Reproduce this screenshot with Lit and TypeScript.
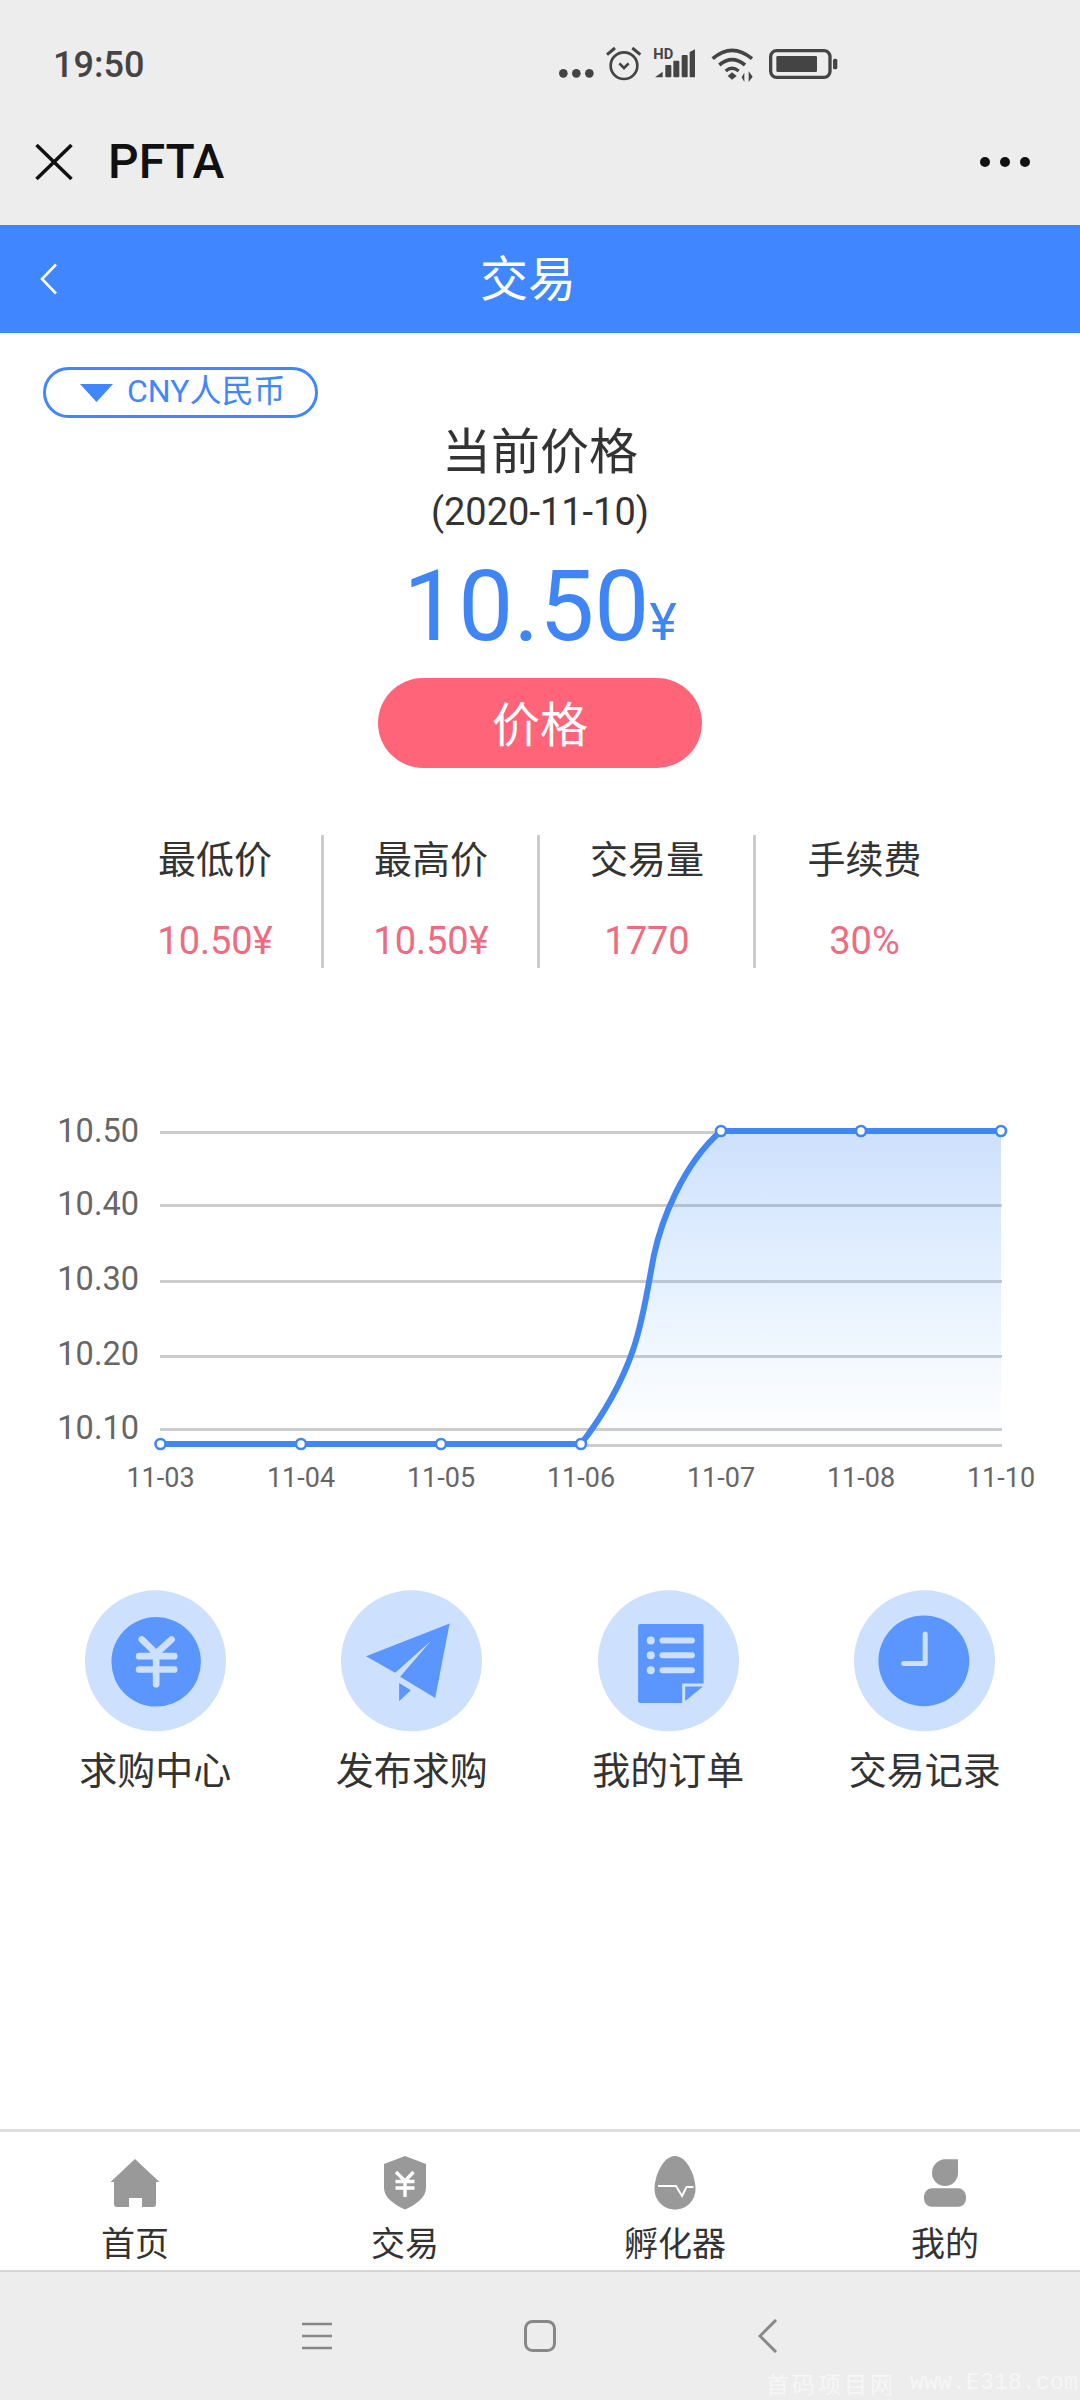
import { LitElement, html, css, svg } from "lit";
import { customElement } from "lit/decorators.js";

const gridYs = [1132, 1205, 1281, 1356, 1429, 1445];
const yLabels: [string, number][] = [["10.50", 1131], ["10.40", 1204], ["10.30", 1279], ["10.20", 1354], ["10.10", 1428]];
const xs = [160.5, 301, 441, 581, 721, 861, 1001];
const xLabels = ["11-03", "11-04", "11-05", "11-06", "11-07", "11-08", "11-10"];
const lowY = 1444;
const highY = 1131;
const rise = `C601 1418 621 1385 633 1350 C644 1318 648 1285 654 1255 C661 1222 682 1165 721 ${highY} H1001`;
const curve = `M160.5 ${lowY} H581 ${rise}`;
const area = `M581 ${lowY} ${rise} V1445 H581 Z`;

const stats = [
  ["最低价", "10.50¥"],
  ["最高价", "10.50¥"],
  ["交易量", "1770"],
  ["手续费", "30%"],
];

const actions = [
  {
    label: "求购中心",
    icon: svg`<svg class="act-ic" viewBox="105 60 422 425"><circle cx="316" cy="272" r="211" fill="#cde0fd"/><circle cx="318" cy="275" r="134" fill="#5b96ff"/><path d="M275 208 L318 250 L364 208 M267 258 H372 M267 298 H372 M318 250 V342" fill="none" stroke="#cde0fd" stroke-width="20" stroke-linecap="round" stroke-linejoin="round"/></svg>`,
  },
  {
    label: "发布求购",
    icon: svg`<svg class="act-ic" viewBox="873 60 422 425"><circle cx="1084" cy="272" r="211" fill="#cde0fd"/><path d="M1198 160 L948 258 L1035 308 L1142 213 L1050 320 L1155 383 Z M1047 338 L1082 360 L1047 393 Z" fill="#5b96ff"/></svg>`,
  },
  {
    label: "我的订单",
    icon: svg`<svg class="act-ic" viewBox="114 60 422 425"><circle cx="325" cy="272" r="211" fill="#cde0fd"/><path d="M240 162 H424 a6 6 0 0 1 6 6 V340 H366 V398 H240 a6 6 0 0 1 -6 -6 V168 a6 6 0 0 1 6 -6 Z M375 392 V349 H428 Z" fill="#5b96ff"/><g fill="#cde0fd"><circle cx="272" cy="211" r="12"/><circle cx="272" cy="255" r="12"/><circle cx="272" cy="300" r="12"/><rect x="298" y="202" width="106" height="18" rx="9"/><rect x="298" y="246" width="106" height="18" rx="9"/><rect x="298" y="291" width="106" height="18" rx="9"/></g></svg>`,
  },
  {
    label: "交易记录",
    icon: svg`<svg class="act-ic" viewBox="883 60 422 425"><circle cx="1094" cy="272" r="211" fill="#cde0fd"/><circle cx="1092" cy="272" r="136" fill="#5b96ff"/><path d="M1096 192 V280 H1032" fill="none" stroke="#cde0fd" stroke-width="15" stroke-linecap="round" stroke-linejoin="round"/></svg>`,
  },
];

const tabs = [
  {
    label: "首页",
    icon: svg`<svg class="tab-ic" viewBox="0 0 60 54"><path d="M30 3 L54.5 26 H51 V48 a3 3 0 0 1 -3 3 H37 V42 H24 V51 H12 a3 3 0 0 1 -3 -3 V26 H5.5 Z" fill="#999"/></svg>`,
  },
  {
    label: "交易",
    icon: svg`<svg class="tab-ic" viewBox="0 0 60 54"><path d="M30 0 L51 8 V32 C51 42 40 49 30 53.5 C20 49 9 42 9 32 V8 Z" fill="#999"/><path d="M21 16 L30 25 L38.5 16 M20.5 25.5 H39.5 M20.5 32 H39.5 M30 25 V41" fill="none" stroke="#fff" stroke-width="3.4"/></svg>`,
  },
  {
    label: "孵化器",
    icon: svg`<svg class="tab-ic" viewBox="0 0 60 54"><path d="M30 0 C42 0 50.5 20 50.5 33 C50.5 45 41 53.5 30 53.5 C19 53.5 9.5 45 9.5 33 C9.5 20 18 0 30 0 Z" fill="#999"/><path d="M13 30 H31 L37 40 L41.5 31 H48.5" fill="none" stroke="#fff" stroke-width="2"/></svg>`,
  },
  {
    label: "我的",
    icon: svg`<svg class="tab-ic" viewBox="0 0 60 54"><path d="M43 3.3 V17 a13 13 0 0 1 -13 13 a13 13 0 0 1 -13 -13 a13.5 13.5 0 0 1 13 -13.7 Z" fill="#999"/><rect x="9" y="32.3" width="42" height="18.5" rx="8" fill="#999"/></svg>`,
  },
];

@customElement("app-root")
export class AppRoot extends LitElement {
  static styles = css`
    :host {
      display: flex;
      flex-direction: column;
      width: 1080px;
      height: 2400px;
      background: #fff;
      color: #333;
      font-family: Roboto, "Noto Sans CJK SC", sans-serif;
      overflow: hidden;
    }
    svg { display: block; flex: none; }
    .status {
      height: 128px;
      flex: none;
      background: #ededed;
      display: flex;
      align-items: center;
      padding-left: 53px;
      box-sizing: border-box;
    }
    .time { font-size: 36px; font-weight: 500; color: #444; line-height: 44px; padding-top: 2px; }
    .status-ic { width: 360px; height: 80px; margin: 0 220px 8px auto; }
    .titlebar {
      height: 97px;
      flex: none;
      background: #ededed;
      display: flex;
      padding: 0 50px 29px 35px;
      box-sizing: border-box;
      align-items: center;
    }
    .close { width: 38px; height: 36px; }
    .app-name { font-size: 48px; font-weight: 500; color: #111; margin-left: 35px; line-height: 68px; }
    .more { width: 50px; height: 10px; margin-left: auto; }
    .header {
      height: 108px;
      flex: none;
      background: #3f86ff;
      display: flex;
      align-items: center;
      padding-left: 40px;
      box-sizing: border-box;
    }
    .back { width: 18px; height: 32px; }
    .header-title { font-size: 48px; color: #fff; margin: 2px 0 0 422px; line-height: 60px; }
    .main { flex: 1; display: flex; flex-direction: column; }
    .pill {
      align-self: flex-start;
      margin: 34px 0 0 43px;
      width: 275px;
      height: 51px;
      box-sizing: border-box;
      border: 3px solid #3f86ff;
      border-radius: 26px;
      display: flex;
      align-items: center;
      padding-left: 34px;
      gap: 14px;
      color: #3f86ff;
      font-size: 32px;
    }
    .pill span { line-height: 40px; margin-top: -3px; }
    .tri { width: 33px; height: 18px; }
    .summary { display: flex; flex-direction: column; align-items: center; }
    .cur { font-size: 49px; line-height: 66px; color: #333; padding-top: 2px; margin-bottom: -2px; }
    .date { font-size: 38px; line-height: 44px; margin-top: 6px; color: #333; }
    .price { margin-top: 18px; height: 110px; line-height: 110px; font-size: 98px; color: #4085f5; white-space: nowrap; }
    .yen { font-size: 52px; line-height: 1; }
    .btn {
      margin-top: 16px;
      width: 324px;
      height: 90px;
      box-sizing: border-box;
      padding-bottom: 4px;
      border-radius: 45px;
      background: #ff6478;
      color: #fff;
      font-size: 48px;
      display: flex;
      align-items: center;
      justify-content: center;
    }
    .stats { display: flex; margin-top: 67px; padding-left: 108px; }
    .stat {
      width: 216px;
      height: 133px;
      box-sizing: border-box;
      border-right: 3px solid #ccc;
      text-align: center;
    }
    .stat:last-child { border-right: none; }
    .stat-label { font-size: 38px; line-height: 50px; color: #333; margin-left: 1px; }
    .stat-value { font-size: 38px; line-height: 50px; margin: 31px 0 0 1px; color: #ee6c82; }
    .chart { width: 1080px; height: 400px; margin-top: 132px; }
    .chart text { font-family: Roboto, sans-serif; fill: #666; }
    .actions { display: grid; grid-template-columns: repeat(4, 256.5px); padding-left: 27px; margin-top: 90px; }
    .action { display: flex; flex-direction: column; align-items: center; }
    .act-ic { width: 141px; height: 142px; }
    .act-label { font-size: 38px; line-height: 50px; margin-top: 14px; color: #333; }
    .tabbar {
      height: 141px;
      flex: none;
      box-sizing: border-box;
      border-top: 3px solid #ddd;
      display: grid;
      grid-template-columns: repeat(4, 270px);
      padding-top: 24px;
    }
    .tab { display: flex; flex-direction: column; align-items: center; }
    .tab-ic { width: 60px; height: 54px; }
    .tab-label { font-size: 34px; line-height: 44px; margin-top: 12px; color: #333; }
    .sysnav {
      height: 130px;
      flex: none;
      box-sizing: border-box;
      background: #ededed;
      border-top: 2px solid #d4d4d4;
      display: flex;
      align-items: center;
      padding-left: 302px;
      position: relative;
    }
    .s-menu { width: 30px; height: 30px; }
    .s-home { width: 32px; height: 32px; margin-left: 192px; }
    .s-back { width: 20px; height: 34px; margin-left: 202px; }
    .watermark {
      position: absolute;
      right: 2px;
      bottom: 4px;
      display: flex;
      gap: 14px;
      line-height: 26px;
      font-size: 23px;
      color: rgba(255, 255, 255, 0.55);
      white-space: nowrap;
    }
    .wm-cn { font-family: "Noto Sans CJK SC", sans-serif; letter-spacing: 3px; }
    .wm-en { font-family: "Liberation Mono", monospace; letter-spacing: 0.2px; }
  `;

  render() {
    return html`
      <div class="status">
        <span class="time">19:50</span>
        <svg class="status-ic" viewBox="0 0 1080 240">
          <g fill="#444">
            <circle cx="190" cy="160" r="13"/><circle cx="229" cy="160" r="13"/><circle cx="268" cy="160" r="13"/>
            <text x="460" y="116" font-family="Roboto" font-weight="700" font-size="44">HD</text>
            <path d="M465 172 L488 155 V172 Z"/>
            <rect x="496" y="135" width="18" height="37" rx="3"/>
            <rect x="520" y="122" width="18" height="50" rx="3"/>
            <rect x="545" y="105" width="18" height="67" rx="3"/>
            <path d="M569 96 L585 88 V172 H569 Z"/>
            <path d="M683 168 L696 157 L710 168 L696 179 Z"/>
            <rect x="829" y="108" width="122" height="48" rx="4"/>
            <rect x="999" y="116" width="13" height="32" rx="5"/>
            <path d="M733 186 V158 L725 172 Z M746 154 V186 L758 170 Z"/>
          </g>
          <g fill="none" stroke="#444">
            <circle cx="372" cy="137" r="40" stroke-width="8"/>
            <path d="M358 130 L372 144 L386 130" stroke-width="8"/>
            <path d="M321 104 L345 84 M421 104 L397 84" stroke-width="9"/>
            <path d="M638 116 Q696 66 756 116" stroke-width="11"/>
            <path d="M658 135 Q696 103 735 135" stroke-width="11"/>
            <path d="M677 153 Q696 137 716 153" stroke-width="10"/>
            <rect x="812" y="92" width="178" height="80" rx="18" stroke-width="10"/>
          </g>
        </svg>
      </div>
      <div class="titlebar">
        <svg class="close" viewBox="0 0 38 36"><path d="M1.5 1 L36.5 35 M36.5 1 L1.5 35" fill="none" stroke="#111" stroke-width="3.5"/></svg>
        <span class="app-name">PFTA</span>
        <svg class="more" viewBox="0 0 50 10"><circle cx="5" cy="5" r="5" fill="#111"/><circle cx="25" cy="5" r="5" fill="#111"/><circle cx="45" cy="5" r="5" fill="#111"/></svg>
      </div>
      <div class="header">
        <svg class="back" viewBox="0 0 18 32"><path d="M16 1.5 L2 16 L16 30.5" fill="none" stroke="#fff" stroke-width="2.6"/></svg>
        <span class="header-title">交易</span>
      </div>
      <div class="main">
        <div class="pill">
          <svg class="tri" viewBox="0 0 33 18"><path d="M0 0 H33 L16.5 18 Z" fill="#3f86ff"/></svg>
          <span>CNY人民币</span>
        </div>
        <div class="summary">
          <div class="cur">当前价格</div>
          <div class="date">(2020-11-10)</div>
          <div class="price">10.50<span class="yen">¥</span></div>
          <div class="btn">价格</div>
        </div>
        <div class="stats">
          ${stats.map(
            ([l, v]) => html`<div class="stat"><div class="stat-label">${l}</div><div class="stat-value">${v}</div></div>`
          )}
        </div>
        <svg class="chart" viewBox="0 1100 1080 400">
          <defs>
            <linearGradient id="fill" x1="0" y1="0" x2="0" y2="1">
              <stop offset="0" stop-color="#3f86f5" stop-opacity="0.26"/>
              <stop offset="0.45" stop-color="#4fa0ff" stop-opacity="0.16"/>
              <stop offset="1" stop-color="#6ab8ff" stop-opacity="0"/>
            </linearGradient>
          </defs>
          ${gridYs.map((y) => svg`<rect x="160" y=${y - 1} width="842" height="3" fill="#ccc"/>`)}
          <path d=${area} fill="url(#fill)"/>
          <path d=${curve} fill="none" stroke="#4286f4" stroke-width="6"/>
          ${xs.map(
            (x, i) => svg`<circle cx=${x} cy=${i < 4 ? lowY : highY} r="5" fill="#fff" stroke="#4286f4" stroke-width="2.6"/>`
          )}
          ${yLabels.map(([t, y]) => svg`<text x="139" y=${y + 11} text-anchor="end" font-size="32.5">${t}</text>`)}
          ${xLabels.map((t, i) => svg`<text x=${xs[i]} y="1487" text-anchor="middle" font-size="27">${t}</text>`)}
        </svg>
        <div class="actions">
          ${actions.map((a) => html`<div class="action">${a.icon}<div class="act-label">${a.label}</div></div>`)}
        </div>
      </div>
      <div class="tabbar">
        ${tabs.map((t) => html`<div class="tab">${t.icon}<div class="tab-label">${t.label}</div></div>`)}
      </div>
      <div class="sysnav">
        <svg class="s-menu" viewBox="0 0 30 30"><path d="M0 3 H30 M0 15 H30 M0 27 H30" stroke="#888" stroke-width="2.6" fill="none"/></svg>
        <svg class="s-home" viewBox="0 0 32 32"><rect x="1.5" y="1.5" width="29" height="29" rx="7" fill="none" stroke="#888" stroke-width="3"/></svg>
        <svg class="s-back" viewBox="0 0 20 34"><path d="M18 1 L2 17 L18 33" fill="none" stroke="#888" stroke-width="3"/></svg>
        <span class="watermark"><span class="wm-cn">首码项目网</span><span class="wm-en">www.E318.com</span></span>
      </div>
    `;
  }
}
